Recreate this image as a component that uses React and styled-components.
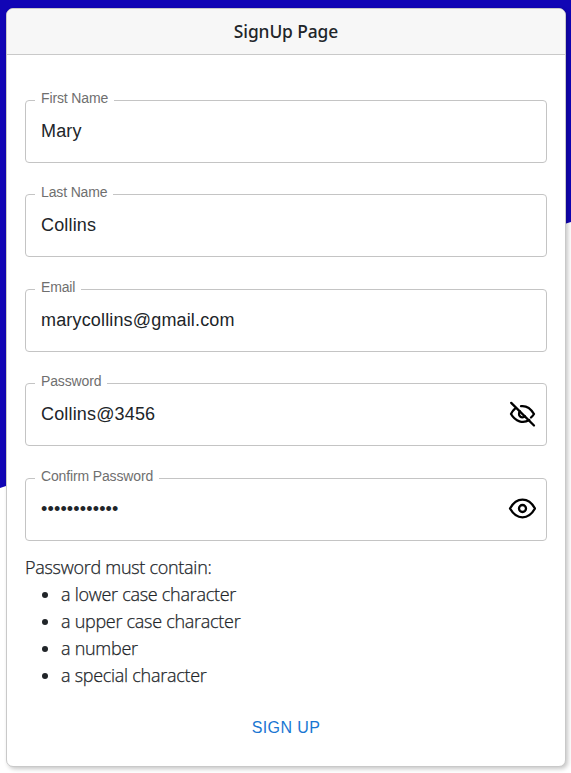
import React from "react";
import styled, { createGlobalStyle } from "styled-components";

const GlobalStyle = createGlobalStyle`
  * { box-sizing: border-box; }
  body { margin: 0; background: #fff; overflow: hidden; }
`;

const Page = styled.main`
  position: relative;
  height: 773px;
  padding: 8px 5px 0 6px;
  color: #212529;
`;

const Backdrop = styled.div`
  position: absolute;
  inset: 0;
  background: #1105b5;
  clip-path: polygon(0 0, 100% 0, 100% 222px, 566px 223.5px, 6px 486px, 0 488px);
`;

const Card = styled.form`
  position: relative;
  height: 759px;
  display: flex;
  flex-direction: column;
  background: #fff;
  border: 1px solid #c9c9c9;
  border-radius: 7px;
  box-shadow: 2px 2px 4px rgba(0, 0, 0, 0.22);
  overflow: hidden;
`;

const Header = styled.h1`
  flex: none;
  height: 46px;
  margin: 0;
  background: #f7f7f7;
  border-bottom: 1px solid #c9c9c9;
  font: 500 17.4px/45px "Noto Sans", "Open Sans", sans-serif;
  letter-spacing: -0.1px;
  text-align: center;
`;

const Fields = styled.div`
  display: grid;
  grid-template-rows: 94px 95px 94px 95px 72px;
  padding: 36px 18px 0;
`;

const Field = styled.fieldset`
  height: 72px;
  min-width: 0;
  margin: 0;
  padding: 0 10px 0 9px;
  border: 1px solid #c4c4c4;
  border-radius: 4px;
`;

const Legend = styled.legend`
  height: 18px;
  padding: 0 6px;
  font: 14px/14px "Liberation Sans", Arial, sans-serif;
  color: #6f6f6f;
  letter-spacing: -0.14px;
`;

const Control = styled.div`
  height: 44px;
  padding-left: 6px;
  display: flex;
  align-items: center;
  justify-content: space-between;
`;

const Input = styled.input`
  flex: 1;
  min-width: 0;
  height: 28px;
  padding: 0;
  border: 0;
  outline: 0;
  background: transparent;
  color: #212529;
  font: 18px/28px "Liberation Sans", Arial, sans-serif;
  letter-spacing: 0.16px;
`;

const Toggle = styled.button`
  flex: none;
  width: 28px;
  height: 28px;
  padding: 0;
  border: 0;
  background: none;
`;

const Glyph = styled.svg`
  display: block;
  fill: none;
  stroke: #000;
  stroke-width: 2.3;
  stroke-linecap: round;
  stroke-linejoin: round;
`;

const Rules = styled.section`
  padding: 13px 18px 0;
  font: 300 18px/27px "Open Sans", "Noto Sans", sans-serif;
  letter-spacing: -0.28px;
  -webkit-text-stroke: 0.25px #212529;
`;

const RulesTitle = styled.p`
  margin: 0;
`;

const RuleList = styled.ul`
  margin: 0;
  padding-left: 36px;
`;

const Submit = styled.button`
  align-self: center;
  margin-top: 22px;
  padding: 0;
  border: 0;
  background: none;
  color: #1976d2;
  font: 16px/34px "Liberation Sans", Arial, sans-serif;
  letter-spacing: 0.4px;
`;

function Eye() {
  return (
    <Glyph width="28" height="28" viewBox="0 0 28 28">
      <path d="M2 13.500C5 8.200 9.200 4.700 14.500 4.700S24 8.200 27 13.500C24 18.800 19.800 22.300 14.500 22.300S5 18.800 2 13.500Z" />
      <circle cx="14.500" cy="13.500" r="3.500" />
    </Glyph>
  );
}

function EyeOff() {
  return (
    <Glyph width="28" height="28" viewBox="0 0 28 28">
      <path d="M3.200 2.900l22.800 22.600" />
      <path d="M13 6.200c5.500-.7 9.500 2 13 7.800-.9 1.400-1.900 2.500-3 3.500" />
      <path d="M7 8.700C5.300 10.100 4.100 11.800 3 14c4.500 7.700 12 9.800 18.300 6" />
      <path d="M12 11.400a3.500 3.500 0 0 0 5 4.900" />
    </Glyph>
  );
}

const fields = [
  { label: "First Name", value: "Mary" },
  { label: "Last Name", value: "Collins" },
  { label: "Email", value: "marycollins@gmail.com" },
  { label: "Password", value: "Collins@3456", icon: <EyeOff /> },
  { label: "Confirm Password", value: "Collins@3456", type: "password", icon: <Eye /> },
];

const rules = [
  "a lower case character",
  "a upper case character",
  "a number",
  "a special character",
];

export default function App() {
  return (
    <Page>
      <GlobalStyle />
      <Backdrop />
      <Card>
        <Header>SignUp Page</Header>
        <Fields>
          {fields.map((f) => (
            <Field key={f.label}>
              <Legend>{f.label}</Legend>
              <Control>
                <Input aria-label={f.label} type={f.type || "text"} defaultValue={f.value} />
                {f.icon && <Toggle type="button" aria-label="Toggle visibility">{f.icon}</Toggle>}
              </Control>
            </Field>
          ))}
        </Fields>
        <Rules>
          <RulesTitle>Password must contain:</RulesTitle>
          <RuleList>{rules.map((r) => <li key={r}>{r}</li>)}</RuleList>
        </Rules>
        <Submit type="button">SIGN UP</Submit>
      </Card>
    </Page>
  );
}
